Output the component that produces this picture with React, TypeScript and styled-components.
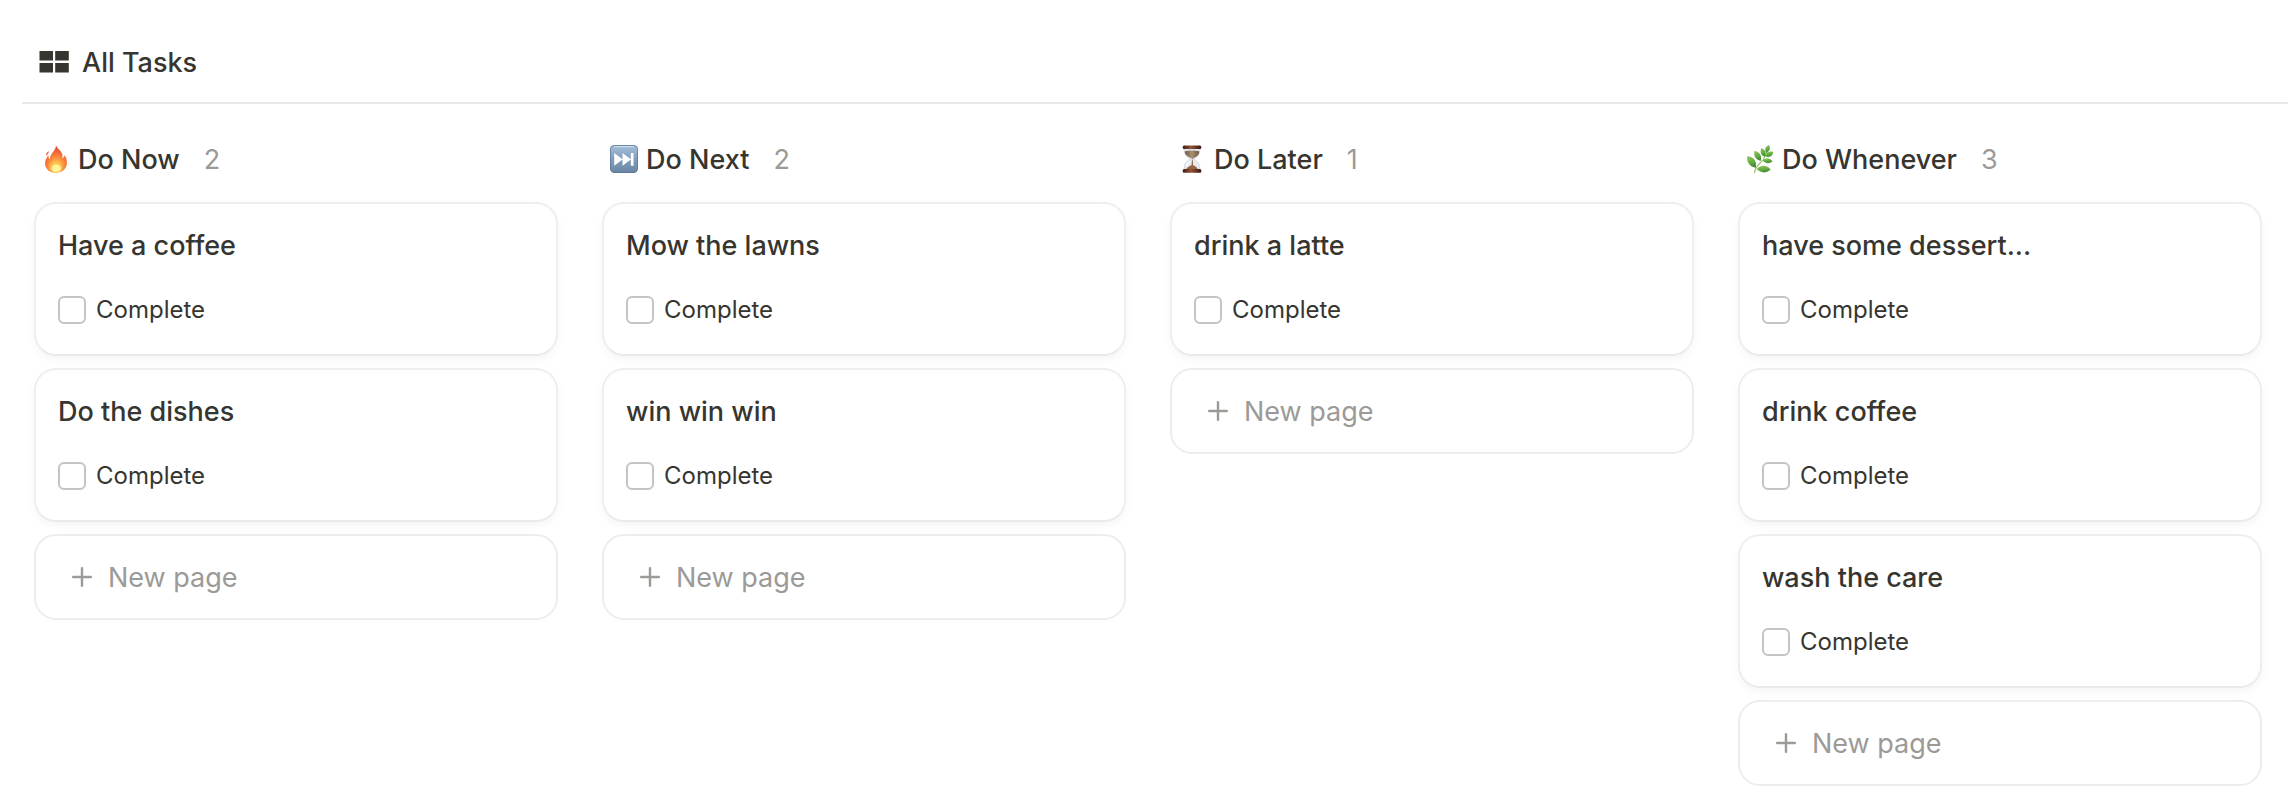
import React, { useId, useState } from "react";
import styled, { createGlobalStyle } from "styled-components";

const GlobalStyle = createGlobalStyle`
  *, *::before, *::after { box-sizing: border-box; }
  body {
    margin: 0;
    background: #ffffff;
    color: #37352f;
    font-family: Inter, "Liberation Sans", sans-serif;
    font-size: 27px;
    line-height: 36px;
  }
`;

const Page = styled.main`
  padding: 45px 0 16px 22px;
`;

const ViewBar = styled.header`
  display: flex;
  padding: 0 0 21px 16px;
  border-bottom: 2px solid #e9e9e8;
`;

const ViewTab = styled.button`
  display: flex;
  align-items: center;
  gap: 12px;
  padding: 0;
  border: 0;
  background: none;
  color: inherit;
  font: inherit;
  font-weight: 550;
  cursor: pointer;
`;

const Board = styled.div`
  display: grid;
  grid-template-columns: repeat(4, minmax(0, 1fr));
  align-items: start;
  gap: 44px;
  padding: 38px 26px 0 12px;
`;

const Column = styled.section`
  display: flex;
  flex-direction: column;
  gap: 12px;
`;

const ColumnHeader = styled.header`
  display: flex;
  align-items: center;
  padding: 0 8px;
  margin-bottom: 12px;
`;

const ColumnTitle = styled.h2`
  margin: 0 24px 0 8px;
  font: inherit;
  font-weight: 550;
`;

const Count = styled.span`
  color: #9b9a97;
`;

const Card = styled.article`
  display: flex;
  flex-direction: column;
  gap: 32px;
  padding: 24px 22px 30px;
  border: 2px solid #eeeeed;
  border-bottom-color: #eaeae9;
  border-radius: 22px;
  background: #ffffff;
  box-shadow: 0 4px 8px rgba(15, 15, 15, 0.04);
`;

const CardTitle = styled.h3`
  margin: 0;
  font: inherit;
  font-weight: 550;
`;

const CheckLabel = styled.label`
  display: flex;
  align-items: center;
  gap: 10px;
  font-size: 24px;
  line-height: 28px;
`;

const CheckBox = styled.input`
  appearance: none;
  flex: none;
  width: 28px;
  height: 28px;
  margin: 0;
  border: 2px solid #c4c4c2;
  border-radius: 6px;
  background: #ffffff;

  &:checked {
    border-color: #2383e2;
    background: #2383e2;
  }
`;

const NewPageButton = styled.button`
  display: flex;
  align-items: center;
  gap: 16px;
  padding: 24px 36px 22px;
  border: 2px solid #ededec;
  border-radius: 22px;
  background: #ffffff;
  color: #9b9a97;
  font: inherit;
  cursor: pointer;
`;

const Icon = styled.svg`
  display: block;
  flex: none;
  margin-bottom: 2px;
`;

const BoardIcon = () => (
  <Icon width="32" height="24" viewBox="0 0 32 24" fill="#37352f" aria-hidden="true">
    <path d="M1.5 1H15v9.4H1.500zM17.200 1h13.600v9.400H17.200zM1.500 13H15v9.600H1.500zM17.200 13h13.600v9.600H17.200z" />
  </Icon>
);

const PlusIcon = () => (
  <Icon width="20" height="20" viewBox="0 0 20 20" fill="none" stroke="currentColor" strokeWidth="2.4" strokeLinecap="round" aria-hidden="true">
    <path d="M10 1.2v17.600M1.200 10h17.600" />
  </Icon>
);

const FireIcon = () => {
  const id = useId();
  return (
    <Icon width="28" height="28" viewBox="0 0 28 28" aria-hidden="true">
      <defs>
        <radialGradient id={`${id}o`} cx="0.52" cy="0.78" r="0.75">
          <stop offset="0" stopColor="#ffc934" />
          <stop offset="0.4" stopColor="#fb9a3a" />
          <stop offset="0.75" stopColor="#f3603a" />
          <stop offset="1" stopColor="#e8402c" />
        </radialGradient>
        <radialGradient id={`${id}i`} cx="0.5" cy="0.85" r="0.8">
          <stop offset="0" stopColor="#fffbd0" />
          <stop offset="0.3" stopColor="#ffd95c" />
          <stop offset="0.7" stopColor="#fa9a48" />
          <stop offset="1" stopColor="#f57045" />
        </radialGradient>
      </defs>
      <path fill={`url(#${id}o)`} d="M14 .2c.8 3.200 5.700 5.600 6.400 9.500.3 1.500.2 2.700-.1 3.600 1.300-.5 2-1.600 2.300-3 1.500 2.200 2.500 5 2.300 8.200-.3 5.500-4.700 9.200-10.600 9.300-6.400.1-10.900-3.400-11.200-8.800-.2-3.800 1.700-6.500 3.200-8.700.1 2 .6 3.200 1.700 4C7.400 8.600 13.800 6.600 14 .2z" />
      <path fill="#ef5b35" d="M6.800 6.200c.3 1.800-1.700 2.700-1.900 4.800-1.400-1.600-.7-3.900 1.900-4.800z" />
      <path fill={`url(#${id}i)`} d="M14.500 8.200c.2 3.500 4.300 5.300 3.700 9.600.9-.3 1.500-1 1.900-2 2.800 5.500.2 11.200-5.900 11.400-6.300.1-9-4.800-6.800-9.900.6.900 1.200 1.400 2.100 1.600-.9-4.600 4.600-6 5-10.700z" opacity=".85" />
      <ellipse cx="14.300" cy="23.300" rx="4.700" ry="3.700" fill="#fff79c" opacity=".85" />
    </Icon>
  );
};

const NextIcon = () => {
  const id = useId();
  return (
    <Icon width="28" height="28" viewBox="0 0 28 28" aria-hidden="true">
      <defs>
        <linearGradient id={id} x1="0" y1="0" x2="0" y2="1">
          <stop offset="0" stopColor="#a3bdd8" />
          <stop offset="0.5" stopColor="#839fbe" />
          <stop offset="1" stopColor="#6c87a6" />
        </linearGradient>
      </defs>
      <rect width="28" height="28" rx="4.5" fill="#62799a" />
      <rect x=".8" y=".8" width="26.4" height="26" rx="4" fill={`url(#${id})`} />
      <path d="M4.500 1.600h19" stroke="#c9d9e9" strokeWidth="1.2" strokeLinecap="round" />
      <path d="M4.200 8l8.300 6.300V8l8.300 6.300V8h2.700v12.800h-2.700v-6.300l-8.300 6.300v-6.300l-8.300 6.300z" fill="#ffffff" />
    </Icon>
  );
};

const HourglassIcon = () => {
  const id = useId();
  return (
    <Icon width="28" height="28" viewBox="0 0 28 28" aria-hidden="true">
      <defs>
        <linearGradient id={`${id}w`}>
          <stop offset="0" stopColor="#3d1c12" />
          <stop offset="0.45" stopColor="#945438" />
          <stop offset="1" stopColor="#35170d" />
        </linearGradient>
        <linearGradient id={`${id}s`}>
          <stop offset="0" stopColor="#6f5a45" />
          <stop offset="0.5" stopColor="#ab9173" />
          <stop offset="1" stopColor="#69523d" />
        </linearGradient>
      </defs>
      <path fill="#e6ebf2" stroke="#c2c9d3" strokeWidth=".6" d="M6.200 3.800h15.600c.3 5.200-1.700 8.100-6.600 10.100 5 2.300 7 5.600 6.600 10.600H6.200c-.4-5 1.600-8.300 6.600-10.600-4.900-2-6.900-4.900-6.600-10.100z" />
      <path fill={`url(#${id}s)`} d="M6.700 6.600c4-1.400 10.600-1.400 14.600 0-.2 3.200-2.200 5.200-5.900 6.700l-1 1.400-.9-1.400c-4.200-1.600-6.500-3.600-6.800-6.700z" />
      <path fill="#96643f" d="M14 15h.7l.4 5.200c2.500.8 4.200 2.400 4.900 4.200H8.200c.7-1.900 2.800-3.500 5.300-4.200z" />
      <path fill="#ffffff" opacity=".85" d="M8.300 19.300c.7-1.700 1.800-2.700 3.400-3.500l-1.400 4.200-2.400 2z" />
      <rect x="4.700" y=".4" width="18.600" height="3.600" rx="1.500" fill={`url(#${id}w)`} />
      <rect x="4.700" y="24" width="18.600" height="3.700" rx="1.500" fill={`url(#${id}w)`} />
    </Icon>
  );
};

const HerbIcon = () => {
  const id = useId();
  return (
    <Icon width="28" height="28" viewBox="0 0 28 28" aria-hidden="true">
      <defs>
        <linearGradient id={id} x1="0" y1="0" x2="0.3" y2="1">
          <stop offset="0" stopColor="#93c95c" />
          <stop offset="0.55" stopColor="#69b044" />
          <stop offset="1" stopColor="#448f34" />
        </linearGradient>
      </defs>
      <path d="M8.600 27.500c.2-5 4.600-8.300 7.900-12 2.400-2.700 2.900-5.500 5-9.500" fill="none" stroke="#8ebc59" strokeWidth="1.1" strokeLinecap="round" />
      <g fill={`url(#${id})`}>
        <path d="M23 .1c1.800 3.300.8 6.100-2.700 7.900-2.100-3.400-1.100-6.200 2.700-7.900z" />
        <path d="M27.200 6.800c-.3 4.200-3 6-7.600 4.800.4-4.200 3.200-6 7.600-4.800z" />
        <path d="M15.300 2.900c4 1.700 5.400 4.800 3.600 8.900-3.900-1.600-5.200-4.700-3.600-8.900z" />
        <path d="M26.600 16.300c-3.200 2.900-6.600 2.600-10.100-.7 3.300-3.200 6.900-3 10.100.7z" />
        <path d="M8.600 5.700c5.300 1.500 7.600 5 6.100 10.200-5.200-1.500-7.500-5-6.100-10.200z" />
        <path d="M1.100 11.300c6.700.5 9.700 4.600 8.800 11.500C3.800 21.800.7 17.800 1.100 11.300z" />
        <path d="M24.700 24.600c-4.700 4-9.500 3.700-14-.5 4.200-4.300 9.800-4.600 14 .5z" />
      </g>
    </Icon>
  );
};

const columns = [
  { title: "Do Now", icon: <FireIcon />, tasks: ["Have a coffee", "Do the dishes"] },
  { title: "Do Next", icon: <NextIcon />, tasks: ["Mow the lawns", "win win win"] },
  { title: "Do Later", icon: <HourglassIcon />, tasks: ["drink a latte"] },
  { title: "Do Whenever", icon: <HerbIcon />, tasks: ["have some dessert...", "drink coffee", "wash the care"] },
];

const TaskCard = ({ title }: { title: string }) => {
  const id = useId();
  const [complete, setComplete] = useState(false);
  return (
    <Card>
      <CardTitle>{title}</CardTitle>
      <CheckLabel htmlFor={id}>
        <CheckBox id={id} type="checkbox" checked={complete} onChange={(e) => setComplete(e.target.checked)} />
        Complete
      </CheckLabel>
    </Card>
  );
};

export default function App() {
  return (
    <>
      <GlobalStyle />
      <Page>
        <ViewBar>
          <ViewTab type="button">
            <BoardIcon />
            All Tasks
          </ViewTab>
        </ViewBar>
        <Board>
          {columns.map(({ title, icon, tasks }) => (
            <Column key={title}>
              <ColumnHeader>
                {icon}
                <ColumnTitle>{title}</ColumnTitle>
                <Count>{tasks.length}</Count>
              </ColumnHeader>
              {tasks.map((task) => (
                <TaskCard key={task} title={task} />
              ))}
              <NewPageButton type="button">
                <PlusIcon />
                New page
              </NewPageButton>
            </Column>
          ))}
        </Board>
      </Page>
    </>
  );
}
